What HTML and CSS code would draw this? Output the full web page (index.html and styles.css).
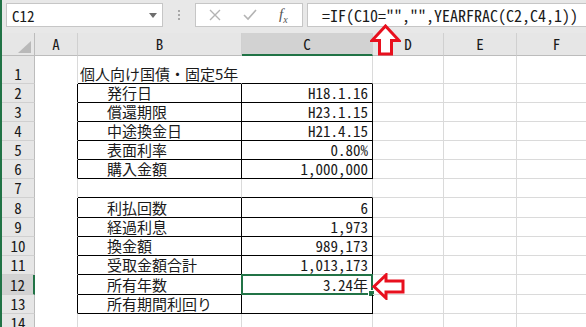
FILE: index.html
```html
<!DOCTYPE html>
<html>
  <head>
    <title>YEARFRAC</title>
    <link rel="stylesheet" href="styles.css">
  </head>
  <body>
    <div class="toolbar">
      <div class="namebox">
        <span>C12</span>
        <svg class="drop" width="8" height="5" viewBox="0 0 8 5"><path d="M0 0H8L4 5Z" fill="#6d6d6d"/></svg>
      </div>
      <div class="dots"><i></i><i></i><i></i></div>
      <div class="fbuttons">
        <svg width="12" height="12" viewBox="0 0 12 12"><path d="M1 1L11 11M11 1L1 11" stroke="#b4b4b4" stroke-width="1.4"/></svg>
        <svg width="14" height="12" viewBox="0 0 14 12"><path d="M1 6L5 10L13 1" stroke="#b4b4b4" stroke-width="1.6" fill="none"/></svg>
        <span class="fx"><i>f</i><sub>x</sub></span>
      </div>
      <div class="formula">=IF(C10="","",YEARFRAC(C2,C4,1))</div>
    </div>

    <div class="sheet">
      <div class="corner"><svg width="13" height="12" viewBox="0 0 13 12"><path d="M13 0V12H0Z" fill="#b9b9b9"/></svg></div>
      <div class="ch">A</div>
      <div class="ch">B</div>
      <div class="ch sel">C</div>
      <div class="ch">D</div>
      <div class="ch">E</div>
      <div class="ch">F</div>

      <div class="rh">1</div><div class="c a"></div><div class="c b top title">個人向け国債・固定5年</div><div class="c v top"></div><div class="c"></div><div class="c"></div><div class="c"></div>
      <div class="rh">2</div><div class="c a edge"></div><div class="c b box">発行日</div><div class="c v box">H18.1.16</div><div class="c"></div><div class="c"></div><div class="c"></div>
      <div class="rh">3</div><div class="c a edge"></div><div class="c b box">償還期限</div><div class="c v box">H23.1.15</div><div class="c"></div><div class="c"></div><div class="c"></div>
      <div class="rh">4</div><div class="c a edge"></div><div class="c b box">中途換金日</div><div class="c v box">H21.4.15</div><div class="c"></div><div class="c"></div><div class="c"></div>
      <div class="rh">5</div><div class="c a edge"></div><div class="c b box">表面利率</div><div class="c v box">0.80%</div><div class="c"></div><div class="c"></div><div class="c"></div>
      <div class="rh">6</div><div class="c a edge"></div><div class="c b box">購入金額</div><div class="c v box">1,000,000</div><div class="c"></div><div class="c"></div><div class="c"></div>
      <div class="rh">7</div><div class="c a"></div><div class="c b top"></div><div class="c v top"></div><div class="c"></div><div class="c"></div><div class="c"></div>
      <div class="rh">8</div><div class="c a edge"></div><div class="c b box">利払回数</div><div class="c v box">6</div><div class="c"></div><div class="c"></div><div class="c"></div>
      <div class="rh">9</div><div class="c a edge"></div><div class="c b box">経過利息</div><div class="c v box">1,973</div><div class="c"></div><div class="c"></div><div class="c"></div>
      <div class="rh">10</div><div class="c a edge"></div><div class="c b box">換金額</div><div class="c v box">989,173</div><div class="c"></div><div class="c"></div><div class="c"></div>
      <div class="rh">11</div><div class="c a edge"></div><div class="c b box">受取金額合計</div><div class="c v box">1,013,173</div><div class="c"></div><div class="c"></div><div class="c"></div>
      <div class="rh sel">12</div><div class="c a edge"></div><div class="c b box">所有年数</div><div class="c v box active">3.24年<div class="cursor"><i class="handle"></i></div></div><div class="c"></div><div class="c"></div><div class="c"></div>
      <div class="rh">13</div><div class="c a edge"></div><div class="c b box">所有期間利回り</div><div class="c v box"></div><div class="c"></div><div class="c"></div><div class="c"></div>
      <div class="rh">14</div><div class="c a"></div><div class="c b"></div><div class="c v"></div><div class="c"></div><div class="c"></div><div class="c"></div>
    </div>

    <svg class="arrow up" width="31" height="32" viewBox="0 0 31 32">
      <path d="M15.5 2L29 16.5H21.5V30H9.5V16.5H2Z" fill="#fff" stroke="#e8101e" stroke-width="3" stroke-linejoin="miter"/>
    </svg>
    <svg class="arrow left" width="33" height="27" viewBox="0 0 33 27">
      <path d="M2 13.5L14 2V8H31V19H14V25Z" fill="#fff" stroke="#e8101e" stroke-width="3" stroke-linejoin="miter"/>
    </svg>
  </body>
</html>
```

FILE: styles.css
```css
body {
  margin: 0;
  width: 586px;
  height: 327px;
  overflow: hidden;
  background: #fff;
  border-left: 2px solid #217346;
  box-sizing: border-box;
  position: relative;
  font-family: "Noto Sans Mono CJK JP", "Noto Sans CJK JP", monospace;
  font-size: 15px;
  color: #1a1a1a;
}
.toolbar {
  height: 33px;
  background: #e8e8e8;
  display: flex;
  align-items: flex-start;
  padding: 3px 0 0 4px;
  box-sizing: border-box;
  white-space: nowrap;
}
.namebox {
  width: 157px;
  height: 24px;
  background: #fff;
  border: 1px solid #c6c6c6;
  box-sizing: border-box;
  display: flex;
  align-items: center;
  justify-content: space-between;
  padding: 0 5px 0 5px;
  font-size: 15px;
}
.dots {
  width: 32px;
  height: 24px;
  display: flex;
  flex-direction: column;
  align-items: center;
  justify-content: center;
  gap: 2px;
}
.dots i {
  width: 2px;
  height: 2px;
  background: #a8a8a8;
}
.fbuttons {
  width: 108px;
  height: 24px;
  background: #fff;
  border: 1px solid #c6c6c6;
  box-sizing: border-box;
  display: flex;
  align-items: center;
  gap: 22px;
  padding-left: 13px;
}
.fx {
  font-family: "Liberation Serif", serif;
  font-size: 15px;
  color: #555;
}
.fx sub {
  font-size: 10px;
  font-style: italic;
}
.formula {
  flex: 1;
  margin-left: 4px;
  height: 24px;
  background: #fff;
  border: 1px solid #c6c6c6;
  border-right: none;
  box-sizing: border-box;
  padding-left: 14px;
  font-size: 16px;
  line-height: 22px;
}
.sheet {
  display: grid;
  grid-template-columns: 33px 43px 164px 131px 71px 73px 80px;
  grid-template-rows: 23px 28px repeat(6, 19px) 20px 19px 19px 19px 20px 19px 19px;
}
.corner,
.ch {
  background: #e6e6e6;
  border-right: 1px solid #d0d0d0;
  border-bottom: 1px solid #bcbcbc;
  box-sizing: border-box;
}
.corner {
  border-right-color: #bcbcbc;
  display: flex;
  align-items: flex-end;
  justify-content: flex-end;
  padding: 0 3px 2px 0;
}
.ch {
  text-align: center;
  line-height: 22px;
}
.ch.sel {
  background: #d2d2d2;
  border-bottom: 2px solid #217346;
}
.rh {
  background: #e6e6e6;
  border-right: 1px solid #bcbcbc;
  border-bottom: 1px solid #d0d0d0;
  box-sizing: border-box;
  display: flex;
  align-items: flex-end;
  justify-content: center;
  line-height: 18px;
}
.rh.sel {
  background: #d2d2d2;
  border-right: 2px solid #217346;
}
.c {
  border-right: 1px solid #dadada;
  border-bottom: 1px solid #dadada;
  box-sizing: border-box;
  white-space: nowrap;
  display: flex;
  align-items: flex-end;
  line-height: 18px;
  position: relative;
}
.a {
  border-bottom-color: #fff;
}
.a.edge {
  border-right-color: #000;
}
.b {
  padding-left: 29px;
  font-family: "Noto Sans CJK JP", sans-serif;
}
.title {
  padding-left: 2px;
  overflow: visible;
  z-index: 1;
}
.v {
  justify-content: flex-end;
  padding-right: 4px;
}
.top {
  border-bottom-color: #000;
}
.title.top {
  border-right-color: transparent;
}
.box {
  border-right-color: #000;
  border-bottom-color: #000;
}
.cursor {
  position: absolute;
  left: -1px;
  top: -1px;
  right: -1px;
  bottom: -1px;
  border: 2px solid #217346;
}
.handle {
  position: absolute;
  right: -4px;
  bottom: -4px;
  width: 5px;
  height: 5px;
  background: #217346;
  border: 1px solid #fff;
}
.arrow {
  position: absolute;
}
.arrow.up {
  left: 368px;
  top: 24px;
}
.arrow.left {
  left: 370px;
  top: 273px;
}
```
